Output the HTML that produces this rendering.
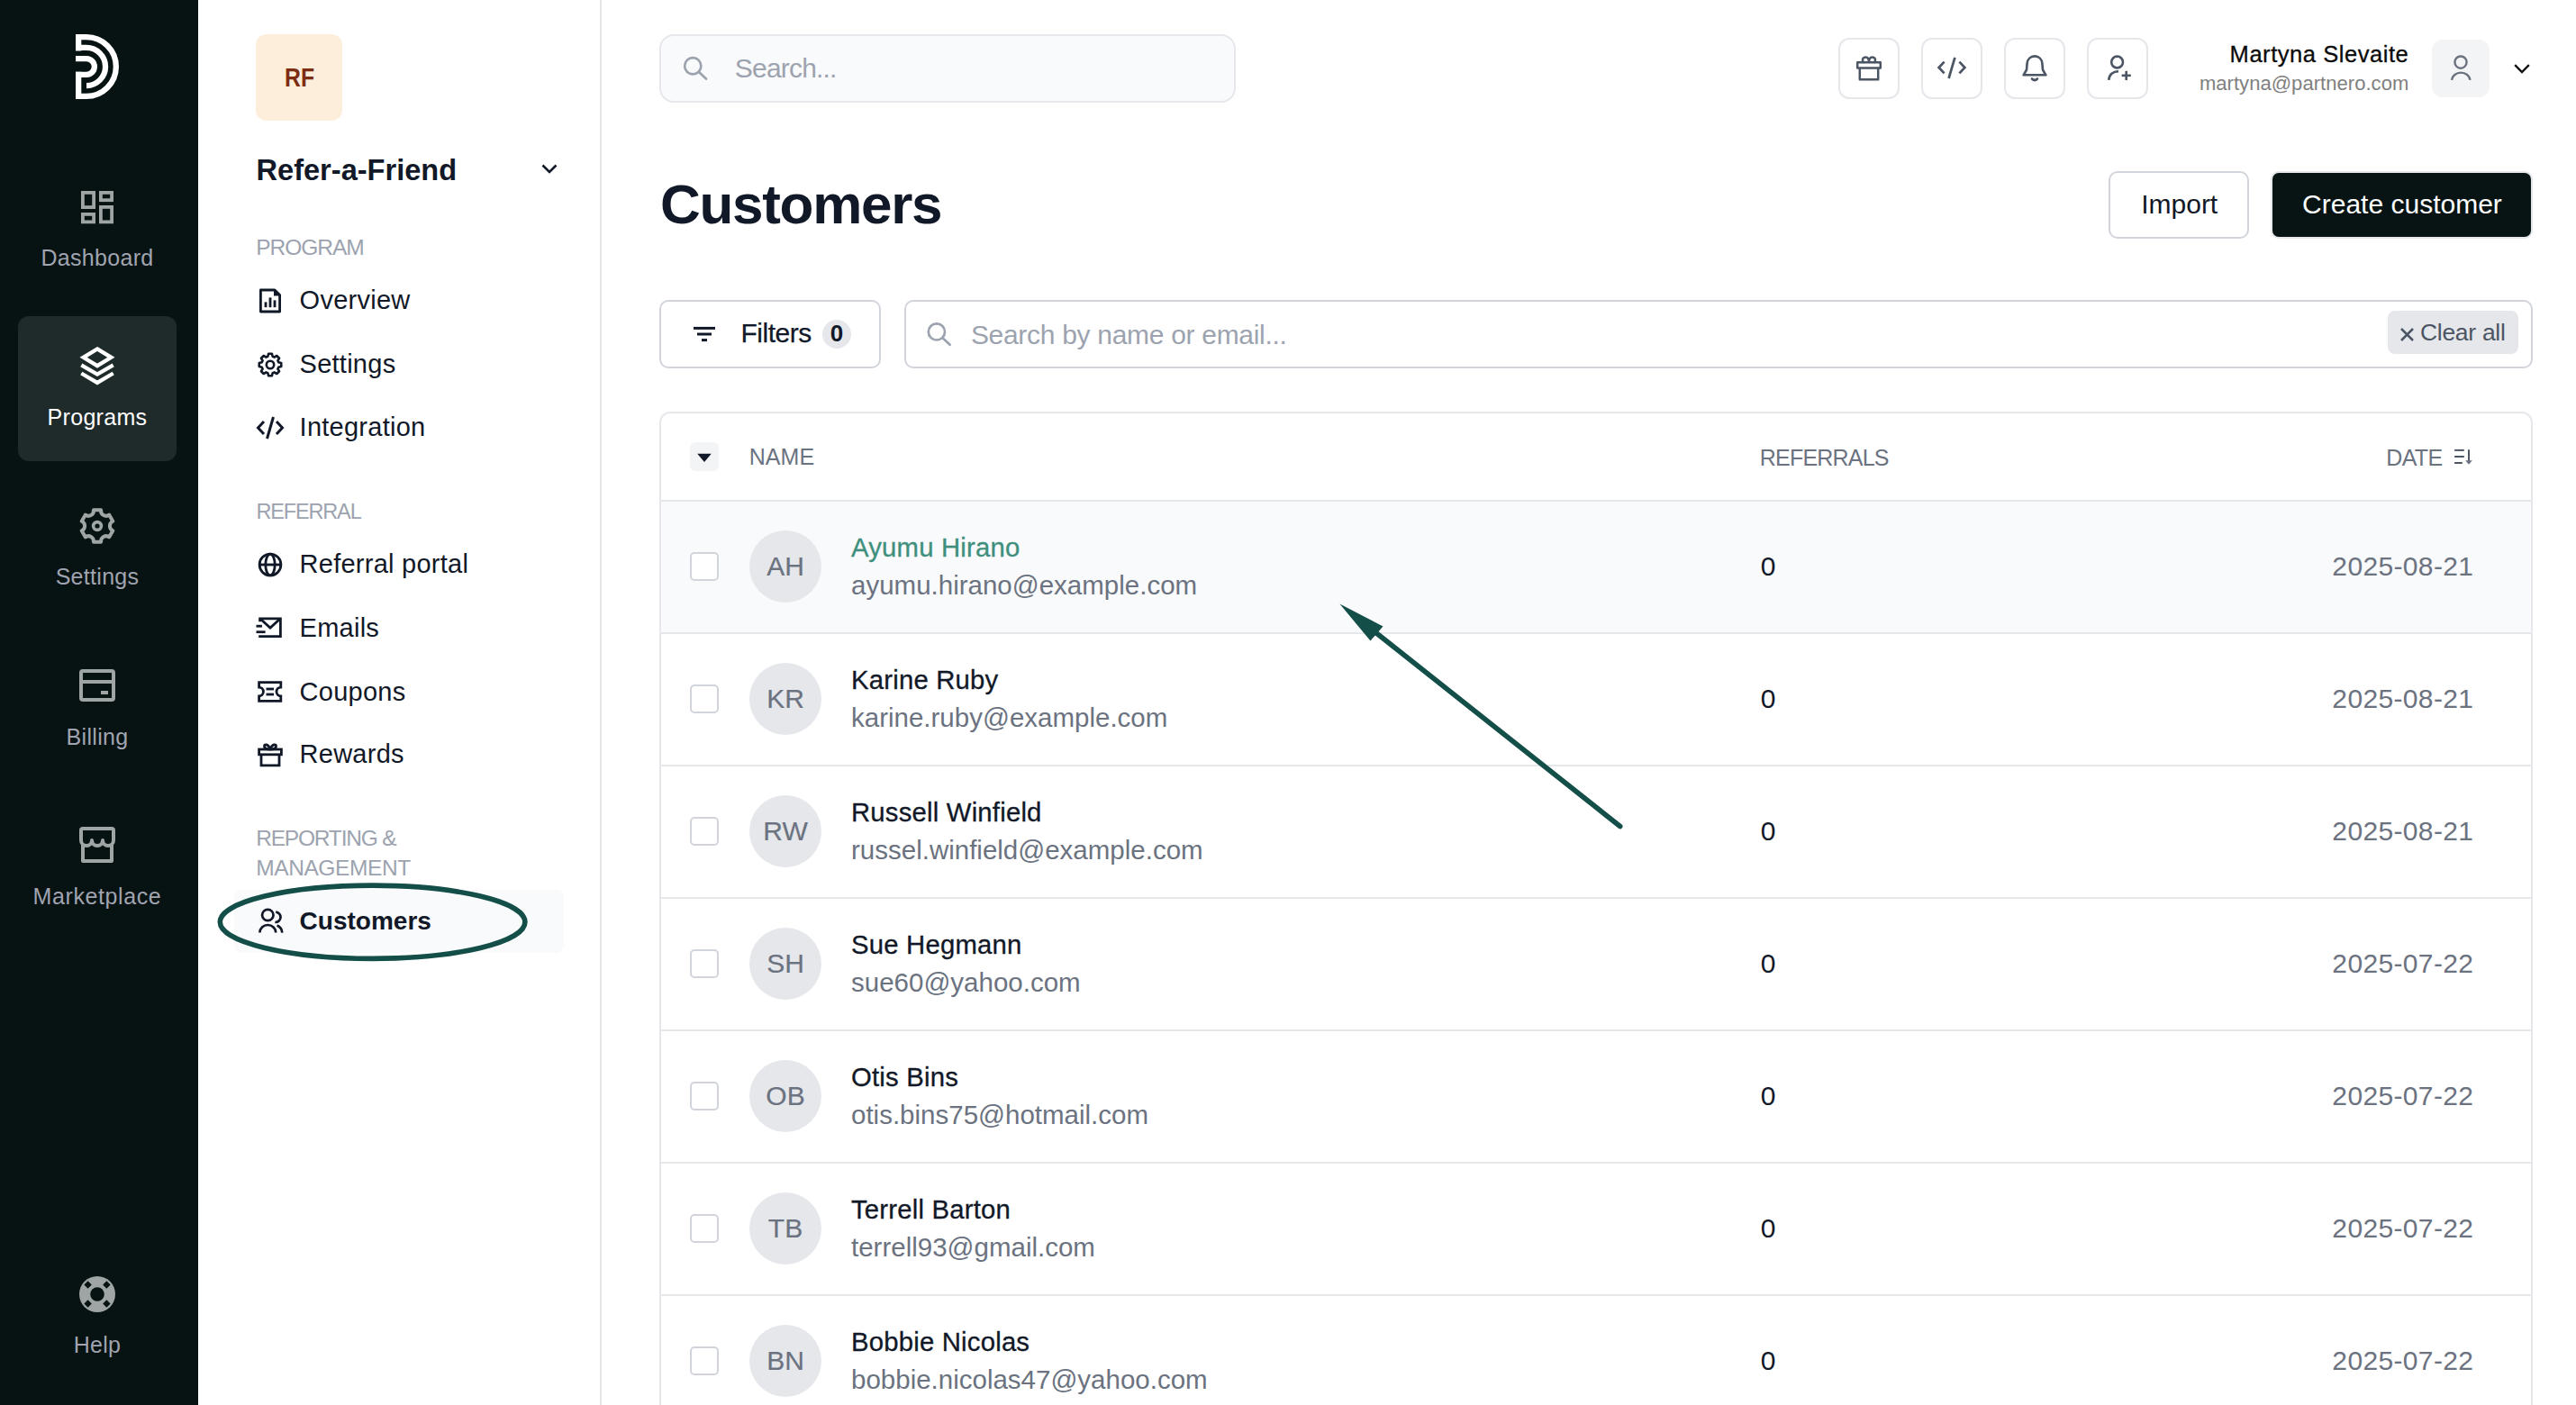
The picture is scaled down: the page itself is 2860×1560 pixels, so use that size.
<!DOCTYPE html>
<html><head><meta charset="utf-8"><title>Customers</title>
<style>
html,body{margin:0;padding:0;}
body{width:2860px;height:1560px;overflow:hidden;position:relative;background:#fff;font-family:"Liberation Sans",sans-serif;}
.t{position:absolute;white-space:nowrap;}
svg{display:block;}
</style></head><body>
<div style="position:absolute;left:0px;top:0px;width:220px;height:1560px;box-sizing:border-box;background:#071212;"></div>
<svg style="position:absolute;left:84px;top:38px;overflow:visible;" width="48" height="72" viewBox="0 0 48 72"><g fill="none" stroke="#fff" stroke-width="6.3" stroke-linejoin="miter"><path d="M3.15 18.4 V3.15 H12 A32.85 32.85 0 0 1 12 68.85 H3.15 V41.8"/><path d="M0 14.95 H12 A21.05 21.05 0 0 1 12 57.05"/><path d="M0 27.15 H12 A8.85 8.85 0 0 1 12 44.85 H0"/></g></svg>
<div style="position:absolute;left:20px;top:351px;width:176px;height:161px;box-sizing:border-box;background:#1f2a2a;border-radius:12px;"></div>
<svg style="position:absolute;left:90px;top:212px;overflow:visible;" width="36" height="36" viewBox="0 0 36 36"><g fill="none" stroke="#9fa5a4" stroke-width="3.8"><rect x="1.9" y="1.9" width="12.2" height="16.2"/><rect x="21.9" y="1.9" width="12.2" height="8.3"/><rect x="1.9" y="25.9" width="12.2" height="8.5"/><rect x="21.9" y="17.9" width="12.2" height="16.5"/></g></svg>
<div class="t" style="left:108.00px;top:271.33px;font-size:25px;line-height:30px;color:#a0a4b0;letter-spacing:0.3px;transform:translateX(-50%);">Dashboard</div>
<svg style="position:absolute;left:89px;top:385px;overflow:visible;" width="38" height="43" viewBox="0 0 38 43"><g fill="none" stroke="#fff" stroke-width="4.3" stroke-linejoin="miter" stroke-miterlimit="10"><path d="M19 2.4 L34.4 11.8 L19 21.2 L3.6 11.8 Z"/><path d="M1.3 20.3 L19 30.5 L36.7 20.3"/><path d="M1.3 29.5 L19 39.9 L36.7 29.5"/></g></svg>
<div class="t" style="left:108.00px;top:448.33px;font-size:25px;line-height:30px;color:#ffffff;letter-spacing:0.3px;transform:translateX(-50%);">Programs</div>
<svg style="position:absolute;left:89px;top:564px;overflow:visible;" width="38" height="40" viewBox="0 0 38 40"><path d="M14.93 2.36 L23.07 2.36 A5.8 5.8 0 0 0 32.24 7.66 L36.31 14.71 A5.8 5.8 0 0 0 36.31 25.29 L32.24 32.34 A5.8 5.8 0 0 0 23.07 37.64 L14.93 37.64 A5.8 5.8 0 0 0 5.76 32.34 L1.69 25.29 A5.8 5.8 0 0 0 1.69 14.71 L5.76 7.66 A5.8 5.8 0 0 0 14.93 2.36 Z" fill="none" stroke="#9fa5a4" stroke-width="4" stroke-linejoin="round"/><circle cx="19" cy="20" r="4.4" fill="none" stroke="#9fa5a4" stroke-width="3.6"/></svg>
<div class="t" style="left:108.00px;top:625.33px;font-size:25px;line-height:30px;color:#a0a4b0;letter-spacing:0.3px;transform:translateX(-50%);">Settings</div>
<svg style="position:absolute;left:88px;top:743px;overflow:visible;" width="40" height="36" viewBox="0 0 40 36"><g fill="none" stroke="#9fa5a4" stroke-width="4"><rect x="2" y="2" width="36" height="32" rx="2"/><line x1="2" y1="14" x2="38" y2="14"/></g><rect x="24" y="24" width="8" height="4" fill="#9fa5a4"/></svg>
<div class="t" style="left:108.00px;top:802.73px;font-size:25px;line-height:30px;color:#a0a4b0;letter-spacing:0.3px;transform:translateX(-50%);">Billing</div>
<svg style="position:absolute;left:88px;top:918px;overflow:visible;" width="40" height="40" viewBox="0 0 40 40"><g fill="none" stroke="#9fa5a4" stroke-width="4" stroke-linejoin="round"><path d="M2 15 V4 Q2 2 4 2 H36 Q38 2 38 4 V15"/><path d="M2 15 A6 6 0 0 0 14 15 A6 6 0 0 0 26 15 A6 6 0 0 0 38 15"/><path d="M4 19 V38 H36 V19"/></g></svg>
<div class="t" style="left:108.00px;top:979.73px;font-size:25px;line-height:30px;color:#a0a4b0;letter-spacing:0.6px;transform:translateX(-50%);">Marketplace</div>
<svg style="position:absolute;left:88px;top:1417px;overflow:visible;" width="40" height="40" viewBox="0 0 40 40"><circle cx="20" cy="20" r="20" fill="#9fa5a4"/><circle cx="20" cy="20" r="7.8" fill="#071212"/><g fill="#071212"><rect x="-3" y="-3" width="6" height="6" transform="translate(9.6 9.6) rotate(45)"/><rect x="-3" y="-3" width="6" height="6" transform="translate(30.4 9.6) rotate(45)"/><rect x="-3" y="-3" width="6" height="6" transform="translate(9.6 30.4) rotate(45)"/><rect x="-3" y="-3" width="6" height="6" transform="translate(30.4 30.4) rotate(45)"/></g></svg>
<div class="t" style="left:108.00px;top:1478.33px;font-size:25px;line-height:30px;color:#a0a4b0;letter-spacing:0.3px;transform:translateX(-50%);">Help</div>
<div style="position:absolute;left:666px;top:0px;width:2px;height:1560px;box-sizing:border-box;background:#e5e7eb;"></div>
<div style="position:absolute;left:284px;top:38px;width:96px;height:96px;box-sizing:border-box;background:#fdeedb;border-radius:12px;"></div>
<div class="t" style="left:316.30px;top:68.47px;font-size:29.5px;line-height:35px;color:#7c2d12;font-weight:700;transform:scaleX(0.84);transform-origin:0 0;">RF</div>
<div class="t" style="left:284.50px;top:168.70px;font-size:32.6px;line-height:39px;color:#111827;font-weight:700;">Refer-a-Friend</div>
<svg style="position:absolute;left:600px;top:180px;overflow:visible;" width="20" height="16" viewBox="0 0 20 16"><path d="M2.5 3.5 L10 11 L17.5 3.5" fill="none" stroke="#111827" stroke-width="2.6"/></svg>
<div class="t" style="left:284.20px;top:259.71px;font-size:24.5px;line-height:29px;color:#9ca3af;letter-spacing:-1.0px;">PROGRAM</div>
<div class="t" style="left:332.60px;top:315.85px;font-size:29px;line-height:35px;color:#111827;letter-spacing:0.25px;">Overview</div>
<svg style="position:absolute;left:286px;top:320px;overflow:visible;" width="28" height="28" viewBox="0 0 28 28"><g fill="none" stroke="#111827" stroke-width="2.8" stroke-linejoin="round"><path d="M3.4 2 H19 L24.6 7.6 V26 H3.4 Z"/></g><path d="M18 1 L25.6 8.6 L18 8.6 Z" fill="#111827"/><g fill="#111827"><rect x="7.6" y="15.4" width="2.8" height="5.8"/><rect x="12.6" y="10.4" width="2.8" height="10.8"/><rect x="17.6" y="13.4" width="2.8" height="7.8"/></g></svg>
<div class="t" style="left:332.60px;top:387.05px;font-size:29px;line-height:35px;color:#111827;letter-spacing:0.25px;">Settings</div>
<svg style="position:absolute;left:286px;top:391px;overflow:visible;" width="28" height="28" viewBox="0 0 28 28"><path d="M11.35 4.77 L12.06 1.75 L15.94 1.75 L16.65 4.77 L18.65 5.60 L21.29 3.97 L24.03 6.71 L22.40 9.35 L23.23 11.35 L26.25 12.06 L26.25 15.94 L23.23 16.65 L22.40 18.65 L24.03 21.29 L21.29 24.03 L18.65 22.40 L16.65 23.23 L15.94 26.25 L12.06 26.25 L11.35 23.23 L9.35 22.40 L6.71 24.03 L3.97 21.29 L5.60 18.65 L4.77 16.65 L1.75 15.94 L1.75 12.06 L4.77 11.35 L5.60 9.35 L3.97 6.71 L6.71 3.97 L9.35 5.60 Z" fill="none" stroke="#111827" stroke-width="2.6" stroke-linejoin="round"/><circle cx="14" cy="14" r="4.2" fill="none" stroke="#111827" stroke-width="2.6"/></svg>
<div class="t" style="left:332.60px;top:457.45px;font-size:29px;line-height:35px;color:#111827;letter-spacing:0.25px;">Integration</div>
<svg style="position:absolute;left:284px;top:462px;overflow:visible;" width="32" height="26" viewBox="0 0 32 26"><g fill="none" stroke="#111827" stroke-width="3" stroke-linecap="butt" stroke-linejoin="miter"><path d="M9 6 L2.5 13 L9 20"/><path d="M23 6 L29.5 13 L23 20"/><path d="M19.5 1 L12.5 25"/></g></svg>
<div class="t" style="left:284.40px;top:553.65px;font-size:23.5px;line-height:28px;color:#9ca3af;letter-spacing:-1.15px;">REFERRAL</div>
<div class="t" style="left:332.60px;top:609.25px;font-size:29px;line-height:35px;color:#111827;letter-spacing:0.25px;">Referral portal</div>
<svg style="position:absolute;left:286px;top:613px;overflow:visible;" width="28" height="28" viewBox="0 0 28 28"><g fill="none" stroke="#111827" stroke-width="2.8"><circle cx="14" cy="14" r="11.9"/><line x1="2" y1="14" x2="26" y2="14"/><ellipse cx="14" cy="14" rx="5.2" ry="11.9"/></g></svg>
<div class="t" style="left:332.60px;top:679.95px;font-size:29px;line-height:35px;color:#111827;letter-spacing:0.25px;">Emails</div>
<svg style="position:absolute;left:283px;top:684px;overflow:visible;" width="32" height="26" viewBox="0 0 32 26"><g fill="none" stroke="#111827" stroke-width="2.8" stroke-linejoin="miter"><path d="M5.6 6.2 V2.8 H28.4 V22.7 H4.2"/><path d="M5.6 2.8 L17 13 L28.4 2.8"/><line x1="1.5" y1="11.2" x2="7.9" y2="11.2"/><line x1="1.5" y1="17.7" x2="11.6" y2="17.7"/></g></svg>
<div class="t" style="left:332.60px;top:750.55px;font-size:29px;line-height:35px;color:#111827;letter-spacing:0.25px;">Coupons</div>
<svg style="position:absolute;left:286px;top:756px;overflow:visible;" width="28" height="24" viewBox="0 0 28 24"><g fill="none" stroke="#111827" stroke-width="2.8" stroke-linejoin="miter"><path d="M1.6 1.6 H25.8 V7.2 A4.8 4.8 0 0 0 25.8 16.8 V22.4 H1.6 V16.8 A4.8 4.8 0 0 0 1.6 7.2 Z"/><line x1="9.5" y1="9" x2="18" y2="9"/><line x1="9.5" y1="15" x2="18" y2="15"/></g></svg>
<div class="t" style="left:332.60px;top:820.05px;font-size:29px;line-height:35px;color:#111827;letter-spacing:0.25px;">Rewards</div>
<svg style="position:absolute;left:286px;top:824px;overflow:visible;" width="28" height="28" viewBox="0 0 28 28"><g fill="none" stroke="#111827" stroke-width="2.8" stroke-linejoin="miter"><rect x="1.6" y="8" width="24.8" height="5.8"/><path d="M4 13.8 V25.8 H24 V13.8"/><path d="M14 8 C12 2 7 1.5 7.5 5 C7.8 7.4 11 8 14 8 C17 8 20.2 7.4 20.5 5 C21 1.5 16 2 14 8"/></g></svg>
<div class="t" style="left:284.20px;top:916.01px;font-size:24.5px;line-height:29px;color:#9ca3af;letter-spacing:-1.2px;">REPORTING &amp;</div>
<div class="t" style="left:284.20px;top:948.61px;font-size:24.5px;line-height:29px;color:#9ca3af;letter-spacing:-0.4px;">MANAGEMENT</div>
<div style="position:absolute;left:260px;top:988px;width:366px;height:70px;box-sizing:border-box;background:#f9fafb;border-radius:8px;"></div>
<div class="t" style="left:332.60px;top:1006.29px;font-size:28px;line-height:34px;color:#111827;font-weight:700;">Customers</div>
<svg style="position:absolute;left:286px;top:1007px;overflow:visible;" width="30" height="30" viewBox="0 0 30 30"><g fill="none" stroke="#111827" stroke-width="2.7" stroke-linecap="butt"><circle cx="11.3" cy="9" r="6.2"/><path d="M2.4 28.6 A8.9 8.6 0 0 1 20.2 28.6"/><path d="M20.2 5.6 A5.6 5.6 0 0 1 19.4 17"/><path d="M21.6 20.6 A9.5 9.5 0 0 1 27.3 28.6"/></g></svg>
<div style="position:absolute;left:732px;top:38px;width:640px;height:76px;box-sizing:border-box;background:#f9fafb;border:2px solid #e5e7eb;border-radius:16px;"></div>
<svg style="position:absolute;left:756px;top:60px;overflow:visible;" width="32" height="32" viewBox="0 0 32 32"><g fill="none" stroke="#9ca3af" stroke-width="2.7" stroke-linecap="round"><circle cx="13.25" cy="13.3" r="9.1"/><line x1="20" y1="20" x2="28" y2="27.6"/></g></svg>
<div class="t" style="left:815.80px;top:57.70px;font-size:30px;line-height:36px;color:#9ca3af;letter-spacing:-0.8px;">Search...</div>
<div style="position:absolute;left:2041px;top:42px;width:68px;height:68px;box-sizing:border-box;border:2px solid #e5e7eb;border-radius:12px;background:#fff;"></div>
<div style="position:absolute;left:2133px;top:42px;width:68px;height:68px;box-sizing:border-box;border:2px solid #e5e7eb;border-radius:12px;background:#fff;"></div>
<div style="position:absolute;left:2225px;top:42px;width:68px;height:68px;box-sizing:border-box;border:2px solid #e5e7eb;border-radius:12px;background:#fff;"></div>
<div style="position:absolute;left:2317px;top:42px;width:68px;height:68px;box-sizing:border-box;border:2px solid #e5e7eb;border-radius:12px;background:#fff;"></div>
<svg style="position:absolute;left:2061px;top:62px;overflow:visible;" width="28" height="28" viewBox="0 0 28 28"><g fill="none" stroke="#4b5563" stroke-width="2.5" stroke-linejoin="round"><rect x="1.2" y="7.2" width="25.6" height="6.4"/><path d="M3.8 13.6 V26.2 H24.2 V13.6"/><path d="M14 7.2 C14 3.5 12.5 1.5 10.2 1.5 C8 1.5 6.6 3.2 7 5.2 C7.3 6.6 8 7.2 8.5 7.2"/><path d="M14 7.2 C14 3.5 15.5 1.5 17.8 1.5 C20 1.5 21.4 3.2 21 5.2 C20.7 6.6 20 7.2 19.5 7.2"/></g></svg>
<svg style="position:absolute;left:2151px;top:63px;overflow:visible;" width="32" height="26" viewBox="0 0 32 26"><g fill="none" stroke="#4b5563" stroke-width="2.7" stroke-linejoin="miter"><path d="M7.6 5.6 L1.6 12 L7.6 18.4"/><path d="M24.4 5.6 L30.4 12 L24.4 18.4"/><path d="M19.4 0.8 L12.6 24"/></g></svg>
<svg style="position:absolute;left:2245px;top:61px;overflow:visible;" width="28" height="31" viewBox="0 0 28 31"><g fill="none" stroke="#4b5563" stroke-width="2.6" stroke-linejoin="round" stroke-linecap="round"><path d="M1.6 22.3 L5 16.5 L5.6 9.5 C6 4.5 9.5 1.4 14 1.4 C18.5 1.4 22 4.5 22.4 9.5 L23 16.5 L26.4 22.3 Z"/><path d="M11 26.5 Q14 29.5 17 26.5"/></g></svg>
<svg style="position:absolute;left:2339px;top:60px;overflow:visible;" width="30" height="31" viewBox="0 0 30 31"><g fill="none" stroke="#4b5563" stroke-width="2.6"><circle cx="11.6" cy="9" r="6.4"/><path d="M2.2 28.8 C2.6 23 7 19.2 13 19.2"/><line x1="16.6" y1="23.8" x2="26.8" y2="23.8"/><line x1="21.7" y1="18.8" x2="21.7" y2="29"/></g></svg>
<div class="t" style="right:185.70px;top:45.46px;font-size:25.5px;line-height:31px;color:#0b0b0b;letter-spacing:0.55px;-webkit-text-stroke:0.3px #0b0b0b;">Martyna Slevaite</div>
<div class="t" style="right:185.70px;top:80.17px;font-size:22px;line-height:26px;color:#808080;letter-spacing:0.05px;">martyna@partnero.com</div>
<div style="position:absolute;left:2700px;top:44px;width:64px;height:64px;box-sizing:border-box;background:#f3f4f6;border-radius:12px;"></div>
<svg style="position:absolute;left:2716px;top:58px;overflow:visible;" width="32" height="34" viewBox="0 0 32 34"><g fill="none" stroke="#6b7280" stroke-width="2.4"><circle cx="16" cy="11.1" r="6.6"/><path d="M6 30.9 A10.3 9.2 0 0 1 26.5 30.9"/></g></svg>
<svg style="position:absolute;left:2790px;top:70px;overflow:visible;" width="20" height="13" viewBox="0 0 20 13"><path d="M2.2 2.2 L10 10 L17.8 2.2" fill="none" stroke="#111" stroke-width="2.4"/></svg>
<div class="t" style="left:733.00px;top:190.11px;font-size:62px;line-height:74px;color:#111827;font-weight:700;letter-spacing:-1.3px;">Customers</div>
<div style="position:absolute;left:2341px;top:190px;width:156px;height:75px;box-sizing:border-box;border:2px solid #d1d5db;border-radius:10px;background:#fff;"></div>
<div class="t" style="left:2377.20px;top:208.90px;font-size:30px;line-height:36px;color:#111827;">Import</div>
<div style="position:absolute;left:2521px;top:190px;width:291px;height:75px;box-sizing:border-box;background:#081414;border:2px solid #e5e7eb;border-radius:9px;"></div>
<div class="t" style="left:2556.10px;top:208.90px;font-size:30px;line-height:36px;color:#ffffff;">Create customer</div>
<div style="position:absolute;left:732px;top:333px;width:246px;height:76px;box-sizing:border-box;border:2px solid #d1d5db;border-radius:10px;background:#fff;"></div>
<svg style="position:absolute;left:768px;top:360px;overflow:visible;" width="30" height="22" viewBox="0 0 30 22"><g stroke="#111827" stroke-width="3"><line x1="2" y1="4.4" x2="26" y2="4.4"/><line x1="6" y1="11" x2="22" y2="11"/><line x1="11" y1="17.6" x2="17" y2="17.6"/></g></svg>
<div class="t" style="left:822.50px;top:351.50px;font-size:30px;line-height:36px;color:#111827;letter-spacing:-0.5px;-webkit-text-stroke:0.25px #111827;">Filters</div>
<div style="position:absolute;left:913px;top:355px;width:32px;height:32px;box-sizing:border-box;background:#e5e7eb;border-radius:50%;"></div>
<div class="t" style="left:929.00px;top:354.59px;font-size:26px;line-height:31px;color:#111827;font-weight:700;transform:translateX(-50%);">0</div>
<div style="position:absolute;left:1004px;top:333px;width:1808px;height:76px;box-sizing:border-box;border:2px solid #d1d5db;border-radius:10px;background:#fff;"></div>
<svg style="position:absolute;left:1026px;top:355px;overflow:visible;" width="32" height="32" viewBox="0 0 32 32"><g fill="none" stroke="#9ca3af" stroke-width="2.7" stroke-linecap="round"><circle cx="13.9" cy="13.4" r="9.1"/><line x1="20.6" y1="20.2" x2="28.6" y2="27.8"/></g></svg>
<div class="t" style="left:1077.90px;top:353.70px;font-size:30px;line-height:36px;color:#9ca3af;letter-spacing:-0.3px;">Search by name or email...</div>
<div style="position:absolute;left:2651px;top:345px;width:145px;height:48px;box-sizing:border-box;background:#e5e7eb;border-radius:8px;"></div>
<svg style="position:absolute;left:2663px;top:362px;overflow:visible;" width="18" height="18" viewBox="0 0 18 18"><g stroke="#4b5563" stroke-width="2.5"><line x1="3" y1="3" x2="16" y2="16"/><line x1="16" y1="3" x2="3" y2="16"/></g></svg>
<div class="t" style="left:2687.00px;top:353.31px;font-size:26.5px;line-height:32px;color:#4b5563;letter-spacing:-0.3px;">Clear all</div>
<div style="position:absolute;left:732px;top:457px;width:2080px;height:1200px;box-sizing:border-box;border:2px solid #e5e7eb;border-radius:12px;background:#fff;"></div>
<div style="position:absolute;left:734px;top:555px;width:2076px;height:2px;box-sizing:border-box;background:#e5e7eb;"></div>
<div style="position:absolute;left:766px;top:491px;width:32px;height:32px;box-sizing:border-box;background:#f3f4f6;border-radius:6px;"></div>
<svg style="position:absolute;left:774px;top:503px;overflow:visible;" width="16" height="11" viewBox="0 0 16 11"><path d="M0.2 0.8 H15.8 L8 10 Z" fill="#111827"/></svg>
<div class="t" style="left:831.70px;top:492.43px;font-size:25px;line-height:30px;color:#6b7280;letter-spacing:0.1px;">NAME</div>
<div class="t" style="left:1953.80px;top:492.73px;font-size:25px;line-height:30px;color:#6b7280;letter-spacing:-0.8px;">REFERRALS</div>
<div class="t" style="left:2649.20px;top:492.73px;font-size:25px;line-height:30px;color:#6b7280;letter-spacing:-0.6px;">DATE</div>
<svg style="position:absolute;left:2722px;top:496px;overflow:visible;" width="26" height="22" viewBox="0 0 26 22"><g stroke="#4b5563" stroke-width="2"><line x1="3.1" y1="3.9" x2="13.8" y2="3.9"/><line x1="3.1" y1="11" x2="13.8" y2="11"/><line x1="3.1" y1="18" x2="11.8" y2="18"/><line x1="19" y1="3.2" x2="19" y2="16"/></g><path d="M15.2 15.3 L22.8 15.3 L19 19.8 Z" fill="#6b7280"/></svg>
<div style="position:absolute;left:734px;top:557px;width:2076px;height:145px;box-sizing:border-box;background:#f9fafb;"></div>
<div style="position:absolute;left:734px;top:702px;width:2076px;height:2px;box-sizing:border-box;background:#e5e7eb;"></div>
<div style="position:absolute;left:766px;top:613px;width:32px;height:32px;box-sizing:border-box;border:2px solid #d1d5db;border-radius:5px;background:#fff;"></div>
<div style="position:absolute;left:832px;top:589px;width:80px;height:80px;box-sizing:border-box;background:#e5e7eb;border-radius:50%;"></div>
<div class="t" style="left:872.00px;top:610.90px;font-size:30px;line-height:36px;color:#6b7280;-webkit-text-stroke:0.2px #6b7280;transform:translateX(-50%);">AH</div>
<div class="t" style="left:945.00px;top:589.84px;font-size:29.3px;line-height:35px;color:#3f8f7d;letter-spacing:0.2px;-webkit-text-stroke:0.3px #3f8f7d;">Ayumu Hirano</div>
<div class="t" style="left:945.00px;top:631.97px;font-size:29.5px;line-height:35px;color:#6b7280;">ayumu.hirano@example.com</div>
<div class="t" style="left:1954.80px;top:611.00px;font-size:30px;line-height:36px;color:#111827;">0</div>
<div class="t" style="right:113.70px;top:611.00px;font-size:30px;line-height:36px;color:#6b7280;letter-spacing:0.35px;">2025-08-21</div>
<div style="position:absolute;left:734px;top:849px;width:2076px;height:2px;box-sizing:border-box;background:#e5e7eb;"></div>
<div style="position:absolute;left:766px;top:760px;width:32px;height:32px;box-sizing:border-box;border:2px solid #d1d5db;border-radius:5px;background:#fff;"></div>
<div style="position:absolute;left:832px;top:736px;width:80px;height:80px;box-sizing:border-box;background:#e5e7eb;border-radius:50%;"></div>
<div class="t" style="left:872.00px;top:757.90px;font-size:30px;line-height:36px;color:#6b7280;-webkit-text-stroke:0.2px #6b7280;transform:translateX(-50%);">KR</div>
<div class="t" style="left:945.00px;top:736.84px;font-size:29.3px;line-height:35px;color:#111827;letter-spacing:0.2px;-webkit-text-stroke:0.3px #111827;">Karine Ruby</div>
<div class="t" style="left:945.00px;top:778.97px;font-size:29.5px;line-height:35px;color:#6b7280;">karine.ruby@example.com</div>
<div class="t" style="left:1954.80px;top:758.00px;font-size:30px;line-height:36px;color:#111827;">0</div>
<div class="t" style="right:113.70px;top:758.00px;font-size:30px;line-height:36px;color:#6b7280;letter-spacing:0.35px;">2025-08-21</div>
<div style="position:absolute;left:734px;top:996px;width:2076px;height:2px;box-sizing:border-box;background:#e5e7eb;"></div>
<div style="position:absolute;left:766px;top:907px;width:32px;height:32px;box-sizing:border-box;border:2px solid #d1d5db;border-radius:5px;background:#fff;"></div>
<div style="position:absolute;left:832px;top:883px;width:80px;height:80px;box-sizing:border-box;background:#e5e7eb;border-radius:50%;"></div>
<div class="t" style="left:872.00px;top:904.90px;font-size:30px;line-height:36px;color:#6b7280;-webkit-text-stroke:0.2px #6b7280;transform:translateX(-50%);">RW</div>
<div class="t" style="left:945.00px;top:883.84px;font-size:29.3px;line-height:35px;color:#111827;letter-spacing:0.2px;-webkit-text-stroke:0.3px #111827;">Russell Winfield</div>
<div class="t" style="left:945.00px;top:925.97px;font-size:29.5px;line-height:35px;color:#6b7280;">russel.winfield@example.com</div>
<div class="t" style="left:1954.80px;top:905.00px;font-size:30px;line-height:36px;color:#111827;">0</div>
<div class="t" style="right:113.70px;top:905.00px;font-size:30px;line-height:36px;color:#6b7280;letter-spacing:0.35px;">2025-08-21</div>
<div style="position:absolute;left:734px;top:1143px;width:2076px;height:2px;box-sizing:border-box;background:#e5e7eb;"></div>
<div style="position:absolute;left:766px;top:1054px;width:32px;height:32px;box-sizing:border-box;border:2px solid #d1d5db;border-radius:5px;background:#fff;"></div>
<div style="position:absolute;left:832px;top:1030px;width:80px;height:80px;box-sizing:border-box;background:#e5e7eb;border-radius:50%;"></div>
<div class="t" style="left:872.00px;top:1051.90px;font-size:30px;line-height:36px;color:#6b7280;-webkit-text-stroke:0.2px #6b7280;transform:translateX(-50%);">SH</div>
<div class="t" style="left:945.00px;top:1030.84px;font-size:29.3px;line-height:35px;color:#111827;letter-spacing:0.2px;-webkit-text-stroke:0.3px #111827;">Sue Hegmann</div>
<div class="t" style="left:945.00px;top:1072.97px;font-size:29.5px;line-height:35px;color:#6b7280;">sue60@yahoo.com</div>
<div class="t" style="left:1954.80px;top:1052.00px;font-size:30px;line-height:36px;color:#111827;">0</div>
<div class="t" style="right:113.70px;top:1052.00px;font-size:30px;line-height:36px;color:#6b7280;letter-spacing:0.35px;">2025-07-22</div>
<div style="position:absolute;left:734px;top:1290px;width:2076px;height:2px;box-sizing:border-box;background:#e5e7eb;"></div>
<div style="position:absolute;left:766px;top:1201px;width:32px;height:32px;box-sizing:border-box;border:2px solid #d1d5db;border-radius:5px;background:#fff;"></div>
<div style="position:absolute;left:832px;top:1177px;width:80px;height:80px;box-sizing:border-box;background:#e5e7eb;border-radius:50%;"></div>
<div class="t" style="left:872.00px;top:1198.90px;font-size:30px;line-height:36px;color:#6b7280;-webkit-text-stroke:0.2px #6b7280;transform:translateX(-50%);">OB</div>
<div class="t" style="left:945.00px;top:1177.84px;font-size:29.3px;line-height:35px;color:#111827;letter-spacing:0.2px;-webkit-text-stroke:0.3px #111827;">Otis Bins</div>
<div class="t" style="left:945.00px;top:1219.97px;font-size:29.5px;line-height:35px;color:#6b7280;">otis.bins75@hotmail.com</div>
<div class="t" style="left:1954.80px;top:1199.00px;font-size:30px;line-height:36px;color:#111827;">0</div>
<div class="t" style="right:113.70px;top:1199.00px;font-size:30px;line-height:36px;color:#6b7280;letter-spacing:0.35px;">2025-07-22</div>
<div style="position:absolute;left:734px;top:1437px;width:2076px;height:2px;box-sizing:border-box;background:#e5e7eb;"></div>
<div style="position:absolute;left:766px;top:1348px;width:32px;height:32px;box-sizing:border-box;border:2px solid #d1d5db;border-radius:5px;background:#fff;"></div>
<div style="position:absolute;left:832px;top:1324px;width:80px;height:80px;box-sizing:border-box;background:#e5e7eb;border-radius:50%;"></div>
<div class="t" style="left:872.00px;top:1345.90px;font-size:30px;line-height:36px;color:#6b7280;-webkit-text-stroke:0.2px #6b7280;transform:translateX(-50%);">TB</div>
<div class="t" style="left:945.00px;top:1324.84px;font-size:29.3px;line-height:35px;color:#111827;letter-spacing:0.2px;-webkit-text-stroke:0.3px #111827;">Terrell Barton</div>
<div class="t" style="left:945.00px;top:1366.97px;font-size:29.5px;line-height:35px;color:#6b7280;">terrell93@gmail.com</div>
<div class="t" style="left:1954.80px;top:1346.00px;font-size:30px;line-height:36px;color:#111827;">0</div>
<div class="t" style="right:113.70px;top:1346.00px;font-size:30px;line-height:36px;color:#6b7280;letter-spacing:0.35px;">2025-07-22</div>
<div style="position:absolute;left:734px;top:1584px;width:2076px;height:2px;box-sizing:border-box;background:#e5e7eb;"></div>
<div style="position:absolute;left:766px;top:1495px;width:32px;height:32px;box-sizing:border-box;border:2px solid #d1d5db;border-radius:5px;background:#fff;"></div>
<div style="position:absolute;left:832px;top:1471px;width:80px;height:80px;box-sizing:border-box;background:#e5e7eb;border-radius:50%;"></div>
<div class="t" style="left:872.00px;top:1492.90px;font-size:30px;line-height:36px;color:#6b7280;-webkit-text-stroke:0.2px #6b7280;transform:translateX(-50%);">BN</div>
<div class="t" style="left:945.00px;top:1471.84px;font-size:29.3px;line-height:35px;color:#111827;letter-spacing:0.2px;-webkit-text-stroke:0.3px #111827;">Bobbie Nicolas</div>
<div class="t" style="left:945.00px;top:1513.97px;font-size:29.5px;line-height:35px;color:#6b7280;">bobbie.nicolas47@yahoo.com</div>
<div class="t" style="left:1954.80px;top:1493.00px;font-size:30px;line-height:36px;color:#111827;">0</div>
<div class="t" style="right:113.70px;top:1493.00px;font-size:30px;line-height:36px;color:#6b7280;letter-spacing:0.35px;">2025-07-22</div>
<svg style="position:absolute;left:0px;top:0px;overflow:visible;pointer-events:none;" width="2860" height="1560" viewBox="0 0 2860 1560"><ellipse cx="413.6" cy="1023.75" rx="169.3" ry="40.6" fill="none" stroke="#134e48" stroke-width="5.6"/><line x1="1798.7" y1="917.5" x2="1522" y2="698" stroke="#134e48" stroke-width="5.6" stroke-linecap="round"/><path d="M1487.4 670.5 L1535.5 695.5 L1521.5 711.5 Z" fill="#134e48"/></svg>
</body></html>
